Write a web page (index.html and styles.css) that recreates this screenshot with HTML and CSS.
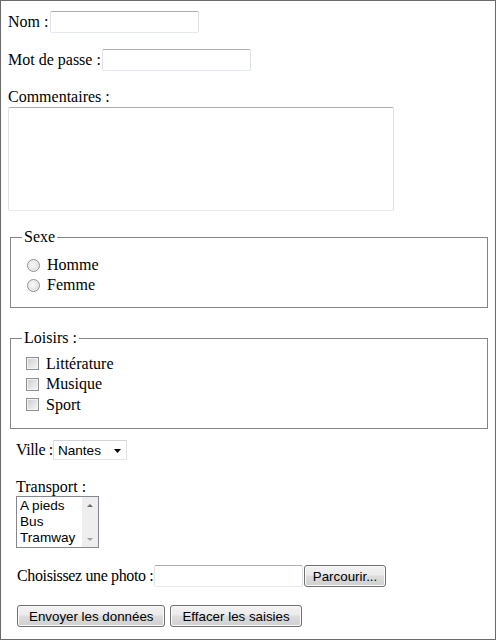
FILE: index.html
```html
<!DOCTYPE html>
<html lang="fr">
<head>
<meta charset="utf-8">
<title>Formulaire</title>
<link rel="stylesheet" href="styles.css">
</head>
<body>
<form class="form" action="#">
  <div class="field-row">
    <label for="nom">Nom :</label>
    <input class="text" id="nom" type="text">
  </div>
  <div class="field-row">
    <label for="pass">Mot de passe :</label>
    <input class="text" id="pass" type="password">
  </div>
  <label class="block-label" for="com">Commentaires :</label>
  <textarea class="comments" id="com"></textarea>

  <fieldset class="group group-sexe">
    <legend>Sexe</legend>
    <label class="choice"><input class="radio" type="radio" name="sexe" value="h">Homme</label>
    <label class="choice"><input class="radio" type="radio" name="sexe" value="f">Femme</label>
  </fieldset>

  <fieldset class="group group-loisirs">
    <legend>Loisirs :</legend>
    <label class="choice"><input class="check" type="checkbox" name="lit">Littérature</label>
    <label class="choice"><input class="check" type="checkbox" name="mus">Musique</label>
    <label class="choice"><input class="check" type="checkbox" name="spo">Sport</label>
  </fieldset>

  <div class="extra">
    <div class="ville-row">
      <label class="tight" for="ville">Ville :</label>
      <span class="select-wrap">
        <select class="select" id="ville">
          <option>Nantes</option>
          <option>Paris</option>
          <option>Lyon</option>
        </select>
        <svg class="select-arrow" width="7" height="4" viewBox="0 0 7 4" aria-hidden="true"><polygon points="0,0 7,0 3.5,4" fill="#000"/></svg>
      </span>
    </div>

    <span class="transport-label">Transport :</span>
    <div class="listbox" role="listbox" aria-label="Transport">
      <ul class="listbox-items">
        <li role="option">A pieds</li>
        <li role="option">Bus</li>
        <li role="option">Tramway</li>
      </ul>
      <div class="scrollbar" aria-hidden="true">
        <span class="sb-btn sb-up"></span>
        <span class="sb-track"></span>
        <span class="sb-btn sb-down"></span>
      </div>
    </div>

    <div class="photo-row">
      <label class="tight" for="photo">Choisissez une photo :</label>
      <input class="text" id="photo" type="text" readonly>
      <button class="btn btn-browse" type="button">Parcourir...</button>
    </div>

    <div class="actions">
      <button class="btn" type="submit">Envoyer les données</button>
      <button class="btn" type="reset">Effacer les saisies</button>
    </div>
  </div>
</form>
</body>
</html>
```

FILE: styles.css
```css
html {
  height: 100%;
  box-sizing: border-box;
  border: 1px solid #6b6b6b;
  background: #fff;
}

body {
  margin: 7px;
  font-family: "Liberation Serif", "Times New Roman", serif;
  font-size: 16px;
  line-height: 18px;
  color: #000;
}

.form {
  display: flex;
  flex-direction: column;
  align-items: flex-start;
  padding-top: 3px;
}

.field-row {
  display: flex;
  align-items: center;
  gap: 1.5px;
}

.field-row + .field-row {
  margin-top: 16px;
}

.text {
  box-sizing: border-box;
  width: 149px;
  height: 22px;
  margin: 0;
  padding: 1px 3px;
  border: 1px solid;
  border-color: #abadb3 #dbdfe6 #e3e9ef #e2e3ea;
  border-radius: 2px;
  background: #fff;
  font: 13.33px "Liberation Sans", Arial, sans-serif;
  outline: none;
}

.block-label {
  margin-top: 17px;
}

.comments {
  box-sizing: border-box;
  width: 386px;
  height: 104px;
  margin: 1px 0 0;
  padding: 2px;
  border: 1px solid;
  border-color: #abadb3 #dbdfe6 #e3e9ef #e2e3ea;
  border-radius: 2px;
  resize: none;
  font: 13.33px "Liberation Sans", Arial, sans-serif;
  outline: none;
}

.group {
  align-self: stretch;
  margin: 17px 0 0 2px;
  padding: 9px 12px 12px;
  border: 1px solid #858585;
  min-inline-size: 0;
}

.group legend {
  padding: 0 2px;
  margin-left: -1px;
  line-height: 18px;
}

.group-loisirs {
  margin-top: 21px;
  padding-top: 6.5px;
  padding-bottom: 13px;
}

.choice {
  display: flex;
  align-items: center;
  height: 20px;
}

.group-loisirs .choice {
  height: 20.5px;
}

.radio {
  appearance: none;
  -webkit-appearance: none;
  box-sizing: border-box;
  width: 13px;
  height: 13px;
  margin: 0 7px 0 4px;
  border: 1px solid #8e8f8f;
  border-radius: 50%;
  background: radial-gradient(circle at 45% 45%, #fbfbfb 0%, #ececec 40%, #cdcdcd 85%, #bdbdbd 100%);
  box-shadow: inset 0 0 0 1px #f2f2f2;
}

.check {
  appearance: none;
  -webkit-appearance: none;
  box-sizing: border-box;
  width: 13px;
  height: 13px;
  margin: 0 7px 0 3px;
  border: 1px solid #8e8f8f;
  background: linear-gradient(135deg, #cbcbcb 0%, #e2e2e2 50%, #f6f6f6 100%);
  box-shadow: inset 0 0 0 1px #f4f4f4;
}

.extra {
  display: flex;
  flex-direction: column;
  align-items: flex-start;
  padding-left: 8px;
}

.tight {
  letter-spacing: -0.37px;
}

.ville-row {
  display: flex;
  align-items: center;
  margin-top: 11px;
}

.select-wrap {
  position: relative;
  display: flex;
}

.select {
  appearance: none;
  -webkit-appearance: none;
  box-sizing: border-box;
  width: 74px;
  height: 20px;
  margin: 0;
  padding: 0 14px 0 4px;
  border: 1px solid;
  border-color: #cfd2d7 #dcdfe4 #e1e4e9 #dcdfe4;
  border-radius: 1px;
  background: #fff;
  color: #000;
  font: 13.6px "Liberation Sans", Arial, sans-serif;
  outline: none;
}

.select-arrow {
  position: absolute;
  right: 6px;
  top: 9px;
  pointer-events: none;
}

.transport-label {
  margin-top: 18px;
}

.listbox {
  box-sizing: border-box;
  display: flex;
  width: 83px;
  height: 52px;
  border: 1px solid #828790;
  background: #fff;
}

.listbox-items {
  flex: 1;
  margin: 0;
  padding: 1px 0 0 3px;
  list-style: none;
  font: 13.6px/16px "Liberation Sans", Arial, sans-serif;
  color: #000;
  overflow: hidden;
  white-space: nowrap;
}

.scrollbar {
  display: flex;
  flex-direction: column;
  width: 16px;
  background: #eeeeee;
}

.sb-btn {
  display: flex;
  align-items: center;
  justify-content: center;
  height: 16px;
}

.sb-track {
  flex: 1;
}

.sb-up::before {
  content: "";
  border-left: 3px solid transparent;
  border-right: 3px solid transparent;
  border-bottom: 3px solid #6a6a6a;
}

.sb-down::before {
  content: "";
  border-left: 3px solid transparent;
  border-right: 3px solid transparent;
  border-top: 3px solid #a0a0a0;
}

.photo-row {
  display: flex;
  align-items: center;
  gap: 1px;
  margin-top: 17px;
  padding-left: 1px;
}

.btn {
  box-sizing: border-box;
  height: 22px;
  margin: 0;
  padding: 0 11px;
  border: 1px solid #707070;
  border-radius: 3px;
  background: linear-gradient(#f2f2f2 0%, #ebebeb 45%, #dddddd 50%, #cfcfcf 100%);
  box-shadow: inset 0 0 0 1px #fbfbfb;
  color: #000;
  font: 13.33px "Liberation Sans", Arial, sans-serif;
  white-space: nowrap;
}

.btn-browse {
  padding: 0 7.5px;
}

.actions {
  display: flex;
  gap: 5px;
  margin-top: 18px;
  padding-left: 1px;
}
```
